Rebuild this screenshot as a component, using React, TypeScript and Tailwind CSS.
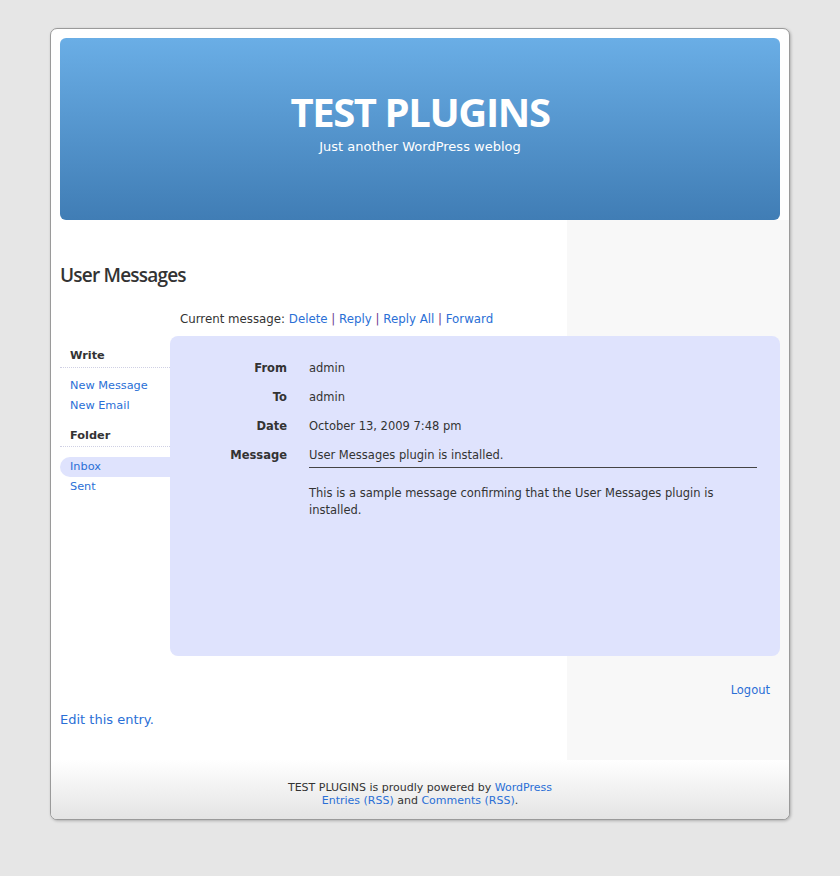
import React from "react";

const body = { fontFamily: '"DejaVu Sans", Verdana, sans-serif' };
const heading = { fontFamily: '"Open Sans", "DejaVu Sans", sans-serif' };

function Sidebar() {
  return (
    <div className="w-[110px] shrink-0 pt-[12px] text-[11.3px]">
      <div className="border-b border-dotted border-[#cfd0e4] pb-[3px] pl-[10px] font-bold leading-4 text-[#333]">
        Write
      </div>
      <div className="mt-[8px] pl-[10px]">
        <a className="block leading-5 text-[#2a6fd6]">New Message</a>
        <a className="block leading-5 text-[#2a6fd6]">New Email</a>
      </div>
      <div className="mt-[12px] border-b border-dotted border-[#cfd0e4] pb-[2px] pl-[10px] font-bold leading-4 text-[#333]">
        Folder
      </div>
      <div className="mt-[10px]">
        <a className="block rounded-l-[10px] bg-[#dfe3fd] pl-[10px] leading-5 text-[#2a6fd6]">Inbox</a>
        <a className="block pl-[10px] leading-5 text-[#2a6fd6]">Sent</a>
      </div>
    </div>
  );
}

function MessagePanel() {
  const rows = [
    ["From", "admin"],
    ["To", "admin"],
    ["Date", "October 13, 2009 7:48 pm"],
  ];
  return (
    <div className="h-[320px] flex-1 rounded-[8px] bg-[#dfe3fd] pl-[20px] pr-[23px] pt-[24px] text-[11.5px] text-[#333]">
      {rows.map(([k, v]) => (
        <div key={k} className="grid h-[29px] grid-cols-[97px_1fr] gap-x-[22px] leading-4">
          <div className="text-right font-bold">{k}</div>
          <div>{v}</div>
        </div>
      ))}
      <div className="grid grid-cols-[97px_1fr] gap-x-[22px] leading-4">
        <div className="text-right font-bold">Message</div>
        <div>
          <div className="border-b border-[#444] pb-[4px]">User Messages plugin is installed.</div>
          <p className="mt-[17px] leading-[17px]">
            This is a sample message confirming that the User Messages plugin is installed.
          </p>
        </div>
      </div>
    </div>
  );
}

export default function App() {
  return (
    <div className="min-h-[876px] bg-[#e6e6e6] pt-[28px]" style={body}>
      <div className="mx-auto w-[740px] overflow-hidden rounded-[7px] border border-[#9a9a9a] bg-white shadow-[1px_1px_3px_rgba(0,0,0,0.25)]">
        <div className="px-[9px] pt-[9px]">
          <header className="h-[182px] rounded-[6px] bg-gradient-to-b from-[#6aaee6] to-[#407db5] pt-[52px] text-center text-white">
            <h1 className="text-[40px] font-bold leading-[44px] tracking-[-1.4px]" style={heading}>
              TEST PLUGINS
            </h1>
            <p className="mt-[5px] text-[13px] leading-4">Just another WordPress weblog</p>
          </header>
        </div>
        <div className="flex">
          <main className="w-[516px] shrink-0 pl-[9px]">
            <h2
              className="mt-[43px] text-[19px] font-semibold leading-6 tracking-[-0.8px] text-[#333]"
              style={heading}
            >
              User Messages
            </h2>
            <div className="relative z-10 w-[720px]">
              <div className="mt-[24px] pl-[120px] text-[11.8px] leading-4 text-[#333]">
                Current message: <a className="text-[#2a6fd6]">Delete</a>{" "}
                <span className="text-[#6b3d8f]">|</span> <a className="text-[#2a6fd6]">Reply</a>{" "}
                <span className="text-[#6b3d8f]">|</span> <a className="text-[#2a6fd6]">Reply All</a>{" "}
                <span className="text-[#6b3d8f]">|</span> <a className="text-[#2a6fd6]">Forward</a>
              </div>
              <div className="mt-[9px] flex">
                <Sidebar />
                <MessagePanel />
              </div>
              <div className="mt-[26px] pr-[10px] text-right text-[11.5px] leading-4">
                <a className="text-[#2a6fd6]">Logout</a>
              </div>
            </div>
            <p className="mt-[14px] text-[13px] leading-4 text-[#2a6fd6]">Edit this entry.</p>
            <div className="h-[32px]" />
          </main>
          <aside className="flex-1 bg-[#f8f8f8]" />
        </div>
        <footer className="h-[59px] bg-gradient-to-b from-white to-[#e4e4e4] pt-[21px] text-center text-[11px] leading-[13px] text-[#333]">
          <p>
            TEST PLUGINS is proudly powered by <a className="text-[#2a6fd6]">WordPress</a>
          </p>
          <p>
            <a className="text-[#2a6fd6]">Entries (RSS)</a> and <a className="text-[#2a6fd6]">Comments (RSS)</a>.
          </p>
        </footer>
      </div>
    </div>
  );
}
